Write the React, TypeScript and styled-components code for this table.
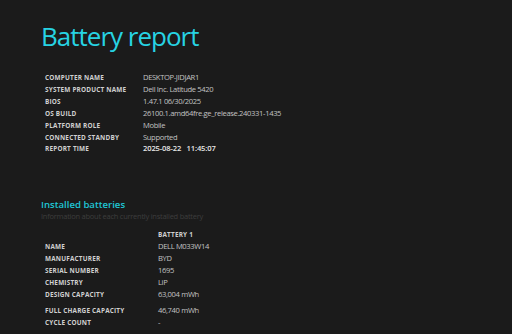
import styled, { createGlobalStyle } from "styled-components"

const GlobalStyle = createGlobalStyle`
  html, body {
    margin: 0;
    padding: 0;
    background: #1b1b1b;
  }
  body {
    font-family: "Open Sans", "Noto Sans", sans-serif;
  }
`

const systemInfo = [
  ["COMPUTER NAME", "DESKTOP-JIDJAR1"],
  ["SYSTEM PRODUCT NAME", "Dell Inc. Latitude 5420"],
  ["BIOS", "1.47.1 06/30/2025"],
  ["OS BUILD", "26100.1.amd64fre.ge_release.240331-1435"],
  ["PLATFORM ROLE", "Mobile"],
  ["CONNECTED STANDBY", "Supported"],
]

const batteryInfo = [
  ["NAME", "DELL M033W14"],
  ["MANUFACTURER", "BYD"],
  ["SERIAL NUMBER", "1695"],
  ["CHEMISTRY", "LiP"],
  ["DESIGN CAPACITY", "63,004 mWh"],
]

const App = () => {
  return (
    <Page>
      <GlobalStyle />
      <Title>Battery report</Title>

      <InfoTable $labelWidth={98}>
        {systemInfo.map(([label, value]) => (
          <Row key={label}>
            <Label>{label}</Label>
            <Value>{value}</Value>
          </Row>
        ))}
        <Row>
          <Label>REPORT TIME</Label>
          <Value $strong>2025-08-22&nbsp;&nbsp;&nbsp;11:45:07</Value>
        </Row>
      </InfoTable>

      <Section>
        <SectionTitle>Installed batteries</SectionTitle>
        <SectionSub>Information about each currently installed battery</SectionSub>

        <InfoTable $labelWidth={113}>
          <Row>
            <Label />
            <ColHead>BATTERY 1</ColHead>
          </Row>
          {batteryInfo.map(([label, value]) => (
            <Row key={label}>
              <Label>{label}</Label>
              <Value>{value}</Value>
            </Row>
          ))}
          <Row $spaced>
            <Label>FULL CHARGE CAPACITY</Label>
            <Value>46,740 mWh</Value>
          </Row>
          <Row>
            <Label>CYCLE COUNT</Label>
            <Value>-</Value>
          </Row>
        </InfoTable>
      </Section>
    </Page>
  )
}

const Page = styled.div`
  width: 512px;
  height: 334px;
  overflow: hidden;
  padding: 18px 0 0 41px;
  box-sizing: border-box;
`

const Title = styled.h1`
  margin: 0 0 18px 0;
  font-size: 26px;
  line-height: 36px;
  font-weight: 400;
  color: #27d3e3;
  letter-spacing: -1px;
`

const InfoTable = styled.div<{ $labelWidth: number }>`
  display: grid;
  grid-template-columns: ${(p) => p.$labelWidth}px auto;
  padding-left: 4px;
`

const Row = styled.div<{ $spaced?: boolean }>`
  display: contents;
  & > * {
    margin-top: ${(p) => (p.$spaced ? "4px" : "0")};
  }
`

const Label = styled.div`
  font-size: 6.4px;
  line-height: 11.9px;
  font-weight: 700;
  letter-spacing: 0.2px;
  color: #d0d0d0;
  white-space: nowrap;
`

const Value = styled.div<{ $strong?: boolean }>`
  font-size: 7.6px;
  line-height: 11.9px;
  font-weight: ${(p) => (p.$strong ? 600 : 400)};
  letter-spacing: ${(p) => (p.$strong ? "-0.15px" : "-0.35px")};
  color: ${(p) => (p.$strong ? "#e8e8e8" : "#c2c2c2")};
  white-space: nowrap;
`

const ColHead = styled(Label)``

const Section = styled.div`
  margin-top: 44px;
`

const SectionTitle = styled.h2`
  margin: 0;
  font-size: 9.6px;
  line-height: 12px;
  font-weight: 600;
  color: #1fc6d6;
`

const SectionSub = styled.div`
  font-size: 7.5px;
  line-height: 11px;
  letter-spacing: -0.25px;
  color: #3d3d3d;
  margin-bottom: 7px;
`

export default App
